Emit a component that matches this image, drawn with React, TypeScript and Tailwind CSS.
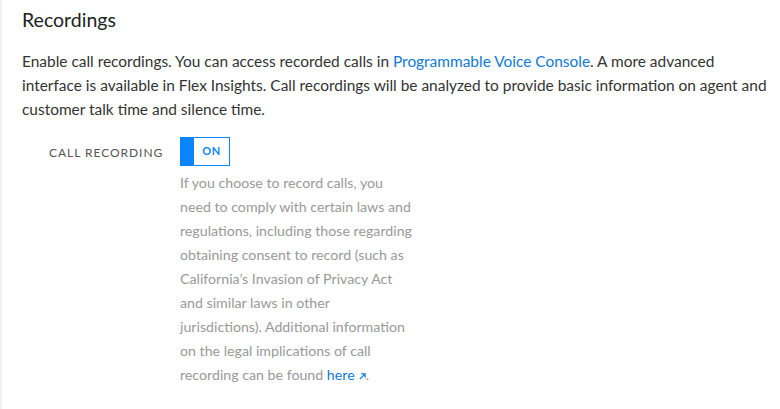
export default function App() {
  const helpLines = [
    'If you choose to record calls, you',
    'need to comply with certain laws and',
    'regulations, including those regarding',
    'obtaining consent to record (such as',
    'California’s Invasion of Privacy Act',
    'and similar laws in other',
    'jurisdictions). Additional information',
    'on the legal implications of call',
  ]

  return (
    <div
      className="min-h-[409px] w-[780px] bg-white border-l-2 border-[#f0f0f0] text-[#333]"
      style={{ fontFamily: 'Lato, "Open Sans", sans-serif' }}
    >
      <div className="pl-5 pr-[8px] pt-[7px]">
        <h2 className="text-[19.5px] leading-[26px] text-[#222]">Recordings</h2>
        <p className="mt-[16px] text-[15.45px] leading-[24px] text-[#333]">
          Enable call recordings. You can access recorded calls in{' '}
          <a className="text-[#0f7ad8]">Programmable Voice Console</a>. A more advanced
          interface is available in Flex Insights. Call recordings will be analyzed to provide
          basic information on agent and customer talk time and silence time.
        </p>

        {/* Call recording setting */}
        <div className="mt-[16px] flex">
          <div className="w-[158px] pl-[27px] pt-[7px] text-[12px] tracking-[0.08em] text-[#555] uppercase">
            Call Recording
          </div>
          <div className="w-[240px]">
            <button
              type="button"
              className="flex h-[29px] w-[50px] border border-[#0a84ff] bg-white"
            >
              <span className="h-full w-[13px] bg-[#0a84ff]" />
              <span className="flex-1 pt-[5px] text-[11px] font-bold tracking-[0.06em] text-[#0a84ff]">
                ON
              </span>
            </button>
            <p className="mt-[5px] whitespace-nowrap text-[14.2px] leading-[24px] text-[#999]">
              {helpLines.map((line) => (
                <span key={line} className="block">
                  {line}
                </span>
              ))}
              <span className="block">
                recording can be found{' '}
                <a className="text-[#0f7ad8]">
                  here
                  <svg
                    viewBox="0 0 8 8"
                    className="ml-[4px] inline-block h-[7px] w-[7px] align-baseline"
                    fill="none"
                    stroke="currentColor"
                    strokeWidth="1.4"
                  >
                    <path d="M1 7 L7 1 M2.5 1 H7 V5.5" />
                  </svg>
                </a>
                .
              </span>
            </p>
          </div>
        </div>
      </div>
    </div>
  )
}
